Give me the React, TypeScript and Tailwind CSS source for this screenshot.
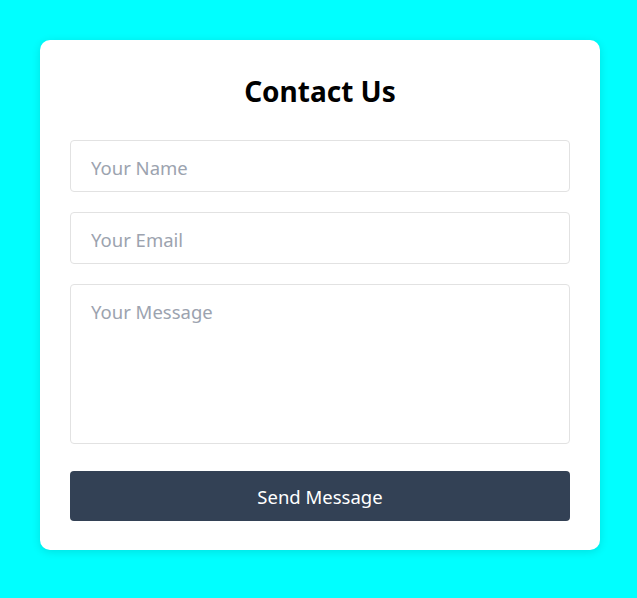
export default function App() {
  const font = { fontFamily: '"Noto Sans", "Open Sans", sans-serif' };
  return (
    <div className="min-h-screen w-full bg-[#00ffff] pt-[40px]" style={font}>
      <div className="mx-[40px] w-[560px] rounded-[10px] bg-white px-[30px] pt-[29px] pb-[29px] shadow-[0_2px_10px_rgba(0,0,0,0.12)]">
        <h2 className="text-center text-[28px] font-bold leading-[44px] text-black mb-[27px]">Contact Us</h2>
        <div className="flex flex-col">
          <input
            placeholder="Your Name"
            className="h-[52px] w-full rounded-[4px] border border-[#e2e2e2] px-[20px] pt-[2px] text-[18.5px] text-gray-800 placeholder:text-[#9ca3af] outline-none"
          />
          <input
            placeholder="Your Email"
            className="mt-[20px] h-[52px] w-full rounded-[4px] border border-[#e2e2e2] px-[20px] pt-[2px] text-[18.5px] text-gray-800 placeholder:text-[#9ca3af] outline-none"
          />
          <textarea
            placeholder="Your Message"
            className="mt-[20px] block h-[160px] w-full resize-none rounded-[4px] border border-[#e2e2e2] px-[20px] py-[13px] text-[18.5px] text-gray-800 placeholder:text-[#9ca3af] outline-none"
          />
          <button className="mt-[27px] h-[50px] w-full rounded-[4px] bg-[#334155] pt-[2px] text-[18.5px] text-white">
            Send Message
          </button>
        </div>
      </div>
    </div>
  );
}
